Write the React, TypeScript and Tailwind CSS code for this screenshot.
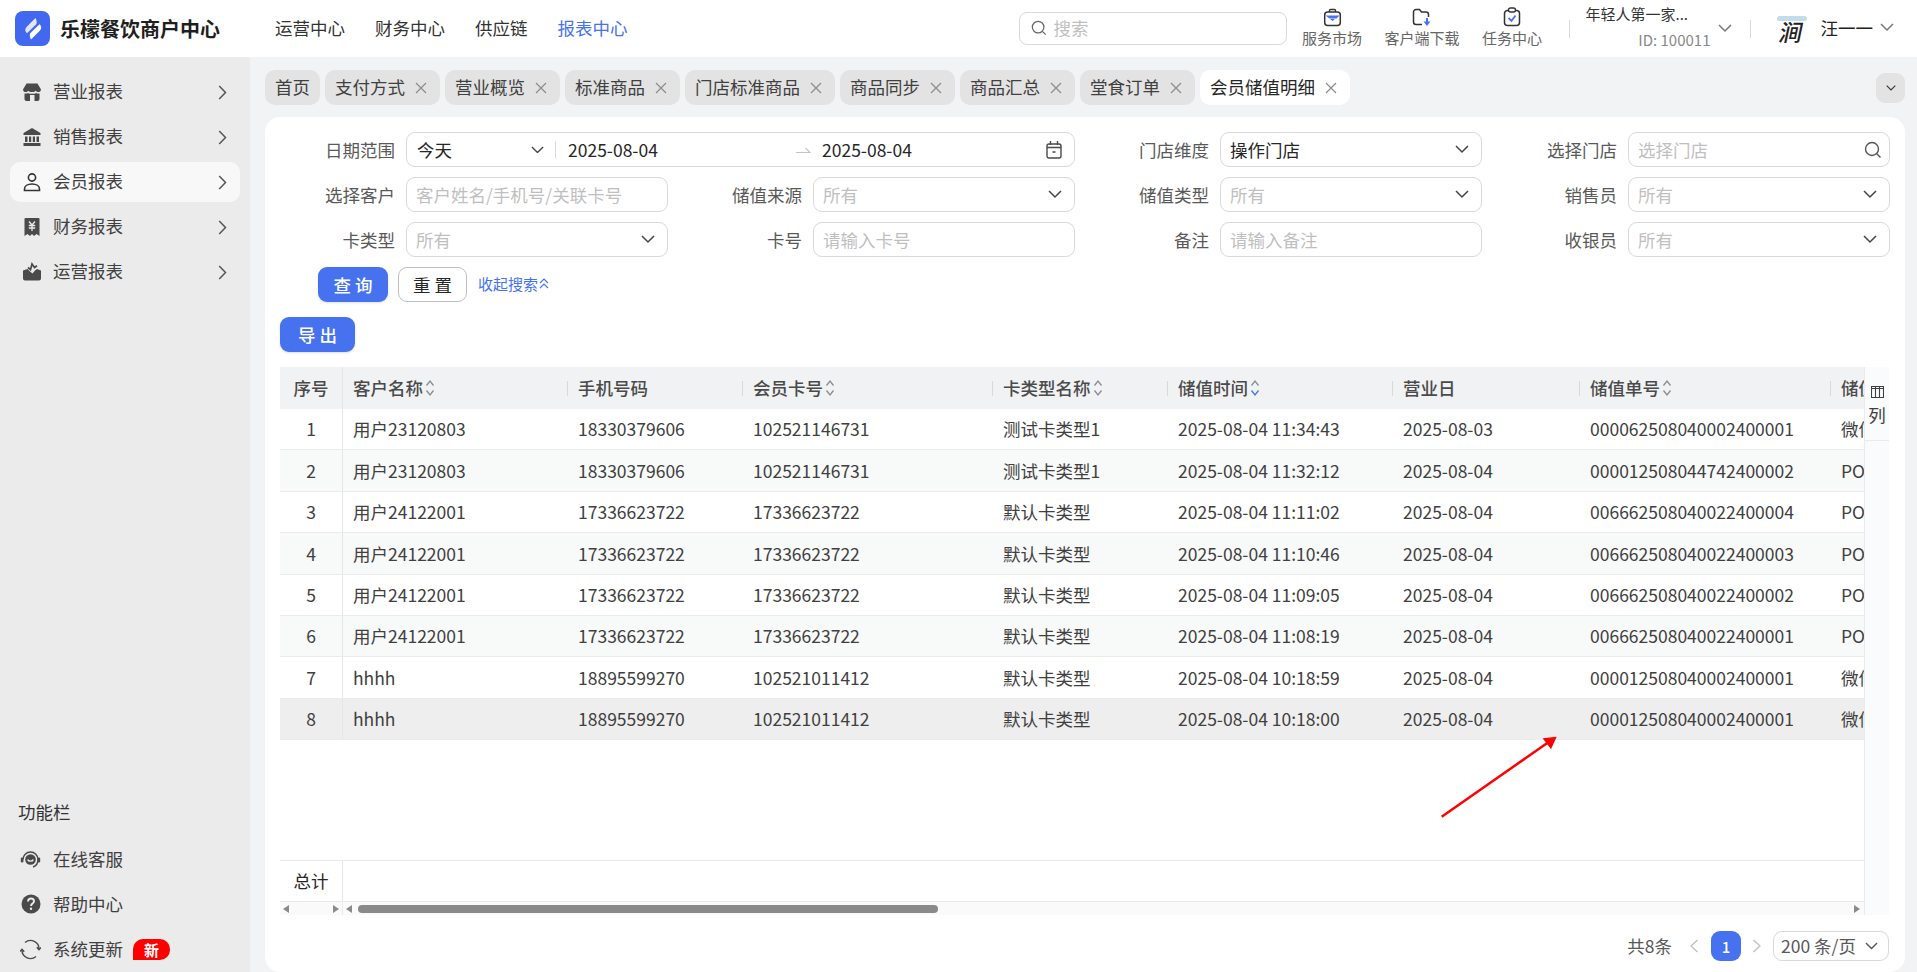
import React from "react";

const FONT = '"Noto Sans CJK SC","Noto Sans",sans-serif';

function ChevDown({ className = "text-[#444]", w = 14 }: { className?: string; w?: number }) {
  return (
    <svg width={w} height={w * 0.6} viewBox="0 0 14 8.4" fill="none" stroke="currentColor" strokeWidth="1.5" className={className + " shrink-0"}>
      <path d="M1 1l6 6 6-6" />
    </svg>
  );
}
function ChevRight() {
  return (
    <svg width="9" height="15" viewBox="0 0 9 15" fill="none" stroke="#555" strokeWidth="1.5" className="shrink-0">
      <path d="M1.2 1l6.3 6.5L1.2 14" />
    </svg>
  );
}
function Close() {
  return (
    <svg width="12" height="12" viewBox="0 0 12 12" fill="none" stroke="#8c8c8c" strokeWidth="1.2" className="shrink-0">
      <path d="M1 1l10 10M11 1L1 11" />
    </svg>
  );
}
function Sort({ active = false }: { active?: boolean }) {
  return (
    <svg width="10" height="18" viewBox="0 0 10 18" fill="none" strokeWidth="1.3" className="shrink-0 ml-[2px]">
      <path d="M1.5 6.5L5 2l3.5 4.5" stroke="#8c8c8c" />
      <path d="M1.5 11.5L5 16l3.5-4.5" stroke={active ? "#4672ef" : "#8c8c8c"} />
    </svg>
  );
}
function SearchIcon({ size = 18, color = "#666" }: { size?: number; color?: string }) {
  return (
    <svg width={size} height={size} viewBox="0 0 18 18" fill="none" stroke={color} strokeWidth="1.4" className="shrink-0">
      <circle cx="8" cy="8" r="6.5" />
      <path d="M12.8 12.8L16.5 16.5" />
    </svg>
  );
}

function IconStore() {
  return (
    <svg width="20" height="20" viewBox="0 0 20 20" fill="#4a4a4a">
      <path d="M4.5 1.5h11l3.5 6c0 1.7-1.3 2.6-2.7 2.6-1.1 0-2-.6-2.6-1.4-.7.8-1.6 1.4-3.7 1.4s-3-.6-3.7-1.4c-.6.8-1.5 1.4-2.6 1.4C2.3 10.100 1 9.200 1 7.500z" />
      <path fillRule="evenodd" d="M2.500 11.500c1.300.3 2.600 0 3.500-.6 1 .6 2.500.9 4 .9s3-.3 4-.9c.9.6 2.200.9 3.500.6V17a2 2 0 0 1-2 2h-11a2 2 0 0 1-2-2zM8 13h4.500v6H8z" />
    </svg>
  );
}
function IconBank() {
  return (
    <svg width="20" height="20" viewBox="0 0 20 20" fill="#4a4a4a">
      <path d="M10 1l8.500 5v2h-17V6zM3 9.500h2.500V15H3zM7 9.500h2.200V15H7zM10.800 9.500H13V15h-2.200zM14.500 9.500H17V15h-2.500zM1.500 16h17v3h-17z" />
    </svg>
  );
}
function IconUser() {
  return (
    <svg width="20" height="20" viewBox="0 0 20 20" fill="none" stroke="#333" strokeWidth="1.6">
      <circle cx="10" cy="5.500" r="3.600" />
      <path d="M2.500 18.500v-1.500c0-3 3-5 7.500-5s7.500 2 7.500 5v1.500z" />
    </svg>
  );
}
function IconReceipt() {
  return (
    <svg width="20" height="20" viewBox="0 0 20 20">
      <path d="M3.500 1h13a1 1 0 0 1 1 1v17l-3-2-2.500 2-2-2-2 2-2.500-2-3 2V2a1 1 0 0 1 1-1z" fill="#4a4a4a" />
      <path d="M7 4.500l3 3.500 3-3.500M6.800 8.500h6.400M6.800 11h6.400M10 8v6" stroke="#ebebeb" strokeWidth="1.300" fill="none" />
    </svg>
  );
}
function IconBox() {
  return (
    <svg width="20" height="20" viewBox="0 0 20 20">
      <path d="M1 8.500l4.500-1.500 2.500 2.500 2.500 2 2.500-3 2-1.500 4 1.500v8a2 2 0 0 1-2 2H3a2 2 0 0 1-2-2z" fill="#4a4a4a" />
      <path d="M6 5.500l2.500 2.200 1.500-5.700 2.500 3.500 2.500-1.800" stroke="#4a4a4a" strokeWidth="1.700" fill="none" />
    </svg>
  );
}
function IconHeadset() {
  return (
    <svg width="21" height="21" viewBox="0 0 21 21" fill="none">
      <path d="M3 10.500a7.500 7.500 0 0 1 15 0c0 3.500-2 6.500-5 7.500" stroke="#4a4a4a" strokeWidth="1.500" />
      <circle cx="10.500" cy="10.500" r="5.300" fill="#4a4a4a" />
      <path d="M7.800 10.500c.4 2.200 5 2.200 5.400 0" stroke="#ebebeb" strokeWidth="1.400" />
      <rect x="0.800" y="8.500" width="2.600" height="5" rx="1.200" fill="#4a4a4a" />
      <rect x="17.600" y="8.500" width="2.600" height="5" rx="1.200" fill="#4a4a4a" />
    </svg>
  );
}
function IconHelp() {
  return (
    <svg width="20" height="20" viewBox="0 0 20 20">
      <circle cx="10" cy="10" r="9.500" fill="#4a4a4a" />
      <path d="M7 7.500c0-2 1.300-3 3-3s3 1 3 2.700c0 2.300-3 2.300-3 4.800" stroke="#ebebeb" strokeWidth="1.900" fill="none" />
      <circle cx="10" cy="14.700" r="1.200" fill="#ebebeb" />
    </svg>
  );
}
function IconSync() {
  return (
    <svg width="21" height="21" viewBox="0 0 21 21" fill="none" stroke="#4a4a4a" strokeWidth="1.400">
      <path d="M5 3.500A8.500 8.500 0 0 1 19 10.500" />
      <path d="M16 17.500A8.500 8.500 0 0 1 2 10.500" />
      <path d="M16.800 8.300L19 10.800l2-2.300M4.200 12.700L2 10.200 0 12.500" />
    </svg>
  );
}
function Bag() {
  return (
    <svg width="19" height="19" viewBox="0 0 19 19" fill="none">
      <path d="M6.500 4V2.500a1 1 0 0 1 1-1h4a1 1 0 0 1 1 1V4" stroke="#333" strokeWidth="1.400" />
      <rect x="1.700" y="4" width="15.600" height="13.500" rx="3" stroke="#333" strokeWidth="1.500" />
      <path d="M2.500 7.500h14l-3 3H6.500z" fill="#4672ef" />
      <path d="M7 11h5l-2.500 2z" fill="#4672ef" />
    </svg>
  );
}
function FolderDown() {
  return (
    <svg width="21" height="19" viewBox="0 0 21 19" fill="none">
      <path d="M10 16.500H4a2.500 2.500 0 0 1-2.500-2.500V4A2.500 2.500 0 0 1 4 1.500h3.500l2 2.500H14a2.500 2.500 0 0 1 2.500 2.500V9" stroke="#333" strokeWidth="1.500" />
      <path d="M15 10v5" stroke="#4672ef" strokeWidth="2" />
      <path d="M11.500 13.500H18.500L15 18z" fill="#4672ef" />
    </svg>
  );
}
function Clip() {
  return (
    <svg width="18" height="20" viewBox="0 0 18 20" fill="none">
      <rect x="1.500" y="3.500" width="15" height="15" rx="3" stroke="#333" strokeWidth="1.500" />
      <rect x="5.500" y="1" width="7" height="4" rx="2" fill="#fff" stroke="#333" strokeWidth="1.400" />
      <path d="M5.500 11l3 2.800 4-5.300" stroke="#4672ef" strokeWidth="1.800" />
    </svg>
  );
}

function Field({ label, ph, value, kind }: { label: string; ph: string; value?: string; kind?: "select" | "search" }) {
  return (
    <>
      <label className="flex items-center justify-end pr-[11px] text-[#595959] whitespace-nowrap">{label}</label>
      <div className="h-[35px] rounded-[9px] border border-[#d9d9d9] bg-white flex items-center justify-between pl-[9px] pr-[12px]">
        <span className={value ? "text-[#262626]" : "text-[#bfbfbf]"}>{value || ph}</span>
        {kind === "select" && <ChevDown />}
        {kind === "search" && <span className="-mr-[5px]"><SearchIcon size={18} color="#555" /></span>}
      </div>
    </>
  );
}

const NAV_SIDE = [
  ["营业报表", <IconStore key="a" />],
  ["销售报表", <IconBank key="b" />],
  ["会员报表", <IconUser key="c" />],
  ["财务报表", <IconReceipt key="d" />],
  ["运营报表", <IconBox key="e" />],
] as const;

const TABS = ["支付方式", "营业概览", "标准商品", "门店标准商品", "商品同步", "商品汇总", "堂食订单"];

const ROWS = [
  ["1", "用户23120803", "18330379606", "102521146731", "测试卡类型1", "2025-08-04 11:34:43", "2025-08-03", "000062508040002400001", "微信"],
  ["2", "用户23120803", "18330379606", "102521146731", "测试卡类型1", "2025-08-04 11:32:12", "2025-08-04", "000012508044742400002", "POS"],
  ["3", "用户24122001", "17336623722", "17336623722", "默认卡类型", "2025-08-04 11:11:02", "2025-08-04", "006662508040022400004", "POS"],
  ["4", "用户24122001", "17336623722", "17336623722", "默认卡类型", "2025-08-04 11:10:46", "2025-08-04", "006662508040022400003", "POS"],
  ["5", "用户24122001", "17336623722", "17336623722", "默认卡类型", "2025-08-04 11:09:05", "2025-08-04", "006662508040022400002", "POS"],
  ["6", "用户24122001", "17336623722", "17336623722", "默认卡类型", "2025-08-04 11:08:19", "2025-08-04", "006662508040022400001", "POS"],
  ["7", "hhhh", "18895599270", "102521011412", "默认卡类型", "2025-08-04 10:18:59", "2025-08-04", "000012508040002400001", "微信"],
  ["8", "hhhh", "18895599270", "102521011412", "默认卡类型", "2025-08-04 10:18:00", "2025-08-04", "000012508040002400001", "微信"],
];

const COLS = "grid-cols-[63px_224px_175px_250px_175px_225px_187px_251px_120px]";

function Tri({ dir }: { dir: "l" | "r" }) {
  return (
    <svg width="6" height="8" viewBox="0 0 6 8" fill="#8a8a8a" className="shrink-0">
      <path d={dir === "l" ? "M6 0v8L0 4z" : "M0 0v8l6-4z"} />
    </svg>
  );
}

function Head({ t, sort, active }: { t: string; sort?: boolean; active?: boolean }) {
  return (
    <div className="flex items-center whitespace-nowrap">
      <span className="w-px h-[15px] bg-[#d9d9d9] mr-[10px] shrink-0" />
      <span>{t}</span>
      {sort && <Sort active={active} />}
    </div>
  );
}

export default function App() {
  return (
    <div className="relative w-[1917px] h-[972px] flex flex-col overflow-hidden bg-[#f2f3f5] text-[17.500px] leading-none text-[#404040]" style={{ fontFamily: FONT }}>
      {/* header */}
      <header className="h-[57px] shrink-0 bg-white flex items-center">
        <div className="ml-[15px] w-[35px] h-[35px] rounded-[8px] bg-[#4268f0] flex items-center justify-center">
          <svg width="20" height="24" viewBox="0 0 20 24">
            <path d="M12.500 1L4 9.500c-2.500 2.500-2 5 0 6.800L13 7.500c1-1 1-4-.5-6.500z" fill="#dfe6ff" />
            <path d="M8 22.500l8.500-8.500c2.500-2.500 2-5 0-6.800L7.500 16c-1 1-1 4 .5 6.500z" fill="#fff" />
          </svg>
        </div>
        <span className="ml-[10px] text-[20px] font-bold text-[#1f1f1f] whitespace-nowrap">乐檬餐饮商户中心</span>
        <nav className="ml-[55px] -mt-[2px] flex gap-[30px] whitespace-nowrap text-[#333]">
          <span>运营中心</span>
          <span>财务中心</span>
          <span>供应链</span>
          <span className="text-[#4672ef]">报表中心</span>
        </nav>
        <div className="ml-[391px] w-[268px] h-[33px] -mt-[1px] rounded-[8px] border border-[#d9d9d9] bg-white flex items-center pl-[11px] gap-[7px] text-[#bfbfbf]">
          <SearchIcon size={16} />
          <span>搜索</span>
        </div>
        <div className="ml-[15px] pb-[5px] flex gap-[22px] text-[15px] text-[#666] whitespace-nowrap">
          <div className="flex flex-col items-center gap-[3px] w-[61px]"><span className="h-[20px] flex items-center"><Bag /></span><span>服务市场</span></div>
          <div className="flex flex-col items-center gap-[3px] w-[75px]"><span className="h-[20px] flex items-center"><FolderDown /></span><span>客户端下载</span></div>
          <div className="flex flex-col items-center gap-[3px] w-[61px]"><span className="h-[20px] flex items-center"><Clip /></span><span>任务中心</span></div>
        </div>
        <span className="ml-[26px] w-px h-[18px] bg-[#d9d9d9] shrink-0" />
        <div className="ml-[16px] w-[125px] pb-[4px] flex flex-col text-[15px] gap-[11px]">
          <span className="text-[#333] whitespace-nowrap">年轻人第一家...</span>
          <span className="text-right text-[#888]">ID: 100011</span>
        </div>
        <span className="ml-[7px]"><ChevDown className="text-[#777]" /></span>
        <span className="ml-[18px] w-px h-[18px] bg-[#d9d9d9] shrink-0" />
        <div className="ml-[22px] w-[38px] h-[38px] rounded-full bg-white flex flex-col items-center shrink-0 overflow-hidden">
          <span className="mt-[6px] w-[30px] h-[5px] rounded-full bg-[#c3dcea]" />
          <span className="-mt-[1px] text-[23px] font-medium text-[#222] -skew-x-12 whitespace-nowrap">涧</span>
        </div>
        <span className="ml-[10px] -mt-[2px] text-[#222] whitespace-nowrap">汪一一</span>
        <span className="ml-[7px] -mt-[2px]"><ChevDown className="text-[#777]" /></span>
      </header>

      <div className="flex-1 flex min-h-0">
        {/* sidebar */}
        <aside className="w-[250px] shrink-0 bg-[#ebebeb] flex flex-col justify-between pt-[15px] pb-[3px]">
          <div className="flex flex-col gap-[5px]">
            {NAV_SIDE.map(([t, icon], i) => (
              <div key={t} className={"mx-[10px] h-[40px] rounded-[10px] flex items-center pl-[12px] pr-[13px] " + (i === 2 ? "bg-[#f8f8f8]" : "")}>
                <span className="w-[20px] flex justify-center -mt-[1px]">{icon}</span>
                <span className="ml-[11px] flex-1 -mt-[2px]">{t}</span>
                <ChevRight />
              </div>
            ))}
          </div>
          <div className="flex flex-col">
            <div className="ml-[18px] h-[24px] mb-[15px] flex items-center text-[#333]">功能栏</div>
            <div className="flex flex-col gap-[5px]">
              <div className="mx-[10px] h-[40px] flex items-center pl-[10px]"><IconHeadset /><span className="ml-[12px]">在线客服</span></div>
              <div className="mx-[10px] h-[40px] flex items-center pl-[11px]"><IconHelp /><span className="ml-[12px]">帮助中心</span></div>
              <div className="mx-[10px] h-[40px] flex items-center pl-[10px]">
                <IconSync />
                <span className="ml-[12px]">系统更新</span>
                <span className="ml-[10px] w-[37px] h-[21px] bg-[#ff0000] text-white text-[15px] font-bold rounded-t-[10px] rounded-br-[10px] flex items-center justify-center">新</span>
              </div>
            </div>
          </div>
        </aside>

        {/* main */}
        <main className="flex-1 min-w-0 flex flex-col pl-[15px] pr-[12px] pt-[13px]">
          <div className="h-[35px] flex items-center gap-[5px] shrink-0">
            <div className="h-[35px] px-[10px] rounded-[10px] bg-[#e3e3e3] flex items-center"><span className="-mt-[2px]">首页</span></div>
            {TABS.map((t) => (
              <div key={t} className="h-[35px] pl-[10px] pr-[13px] rounded-[10px] bg-[#e3e3e3] flex items-center gap-[10px] whitespace-nowrap">
                <span className="-mt-[2px]">{t}</span>
                <Close />
              </div>
            ))}
            <div className="h-[35px] pl-[10px] pr-[13px] rounded-[10px] bg-white flex items-center gap-[10px] whitespace-nowrap text-[#262626]">
              <span className="-mt-[2px]">会员储值明细</span>
              <Close />
            </div>
            <div className="ml-auto w-[29px] h-[30px] rounded-[9px] bg-[#e3e3e3] flex items-center justify-center">
              <ChevDown w={10} className="text-[#333]" />
            </div>
          </div>

          <div className="mt-[12px] flex-1 min-h-0 rounded-[15px] bg-white flex flex-col pl-[15px] pr-[16px] pt-[15px]">
            {/* filters */}
            <div className="ml-[11px] grid grid-cols-[115px_262px_145px_262px_145px_262px_146px_262px] gap-y-[10px]">
              <label className="flex items-center justify-end pr-[11px] text-[#595959]">日期范围</label>
              <div className="col-span-3 h-[35px] rounded-[9px] border border-[#d9d9d9] flex items-center pl-[10px] pr-[12px]">
                <span className="text-[#262626] w-[114px]">今天</span>
                <ChevDown w={13} />
                <span className="ml-[11px] w-px h-[17px] bg-[#d9d9d9]" />
                <span className="ml-[12px] text-[#262626] w-[228px]">2025-08-04</span>
                <svg width="15" height="8" viewBox="0 0 15 8" fill="none" stroke="#c4c4c4" strokeWidth="1.200" className="shrink-0">
                  <path d="M0 6.500h14L9.500 2" />
                </svg>
                <span className="ml-[11px] text-[#262626] flex-1">2025-08-04</span>
                <svg width="16" height="18" viewBox="0 0 16 18" fill="none" stroke="#4a4a4a" strokeWidth="1.400" className="shrink-0">
                  <rect x="1" y="3" width="14" height="14" rx="2" />
                  <path d="M4.500 0v4M11.500 0v4M1 6.500h14M6.500 11h3" />
                </svg>
              </div>
              <Field label="门店维度" ph="" value="操作门店" kind="select" />
              <Field label="选择门店" ph="选择门店" kind="search" />

              <Field label="选择客户" ph="客户姓名/手机号/关联卡号" />
              <Field label="储值来源" ph="所有" kind="select" />
              <Field label="储值类型" ph="所有" kind="select" />
              <Field label="销售员" ph="所有" kind="select" />

              <Field label="卡类型" ph="所有" kind="select" />
              <Field label="卡号" ph="请输入卡号" />
              <Field label="备注" ph="请输入备注" />
              <Field label="收银员" ph="所有" kind="select" />
            </div>

            <div className="mt-[10px] ml-[38px] flex items-center h-[35px] shrink-0">
              <button className="w-[70px] h-[35px] pl-[4px] rounded-[9px] bg-[#4672ef] text-white font-medium tracking-[4px] shadow-sm">查询</button>
              <button className="ml-[10px] w-[69px] h-[35px] pl-[4px] rounded-[9px] border border-[#bfbfbf] bg-white text-[#262626] tracking-[4px]">重置</button>
              <span className="ml-[11px] -mt-[2px] text-[15px] text-[#4672ef] whitespace-nowrap flex items-center">
                收起搜索
                <svg width="10" height="11" viewBox="0 0 10 11" fill="none" stroke="#4672ef" strokeWidth="1.100" className="ml-[1px]">
                  <path d="M1 5l4-4 4 4M1 10l4-4 4 4" />
                </svg>
              </span>
            </div>

            <div className="mt-[15px] shrink-0">
              <button className="w-[75px] h-[35px] pl-[4px] rounded-[9px] bg-[#4672ef] text-white font-medium tracking-[4px] shadow-sm">导出</button>
            </div>

            {/* table */}
            <div className="mt-[15px] h-[548px] shrink-0 flex">
              <div className="w-[1584px] shrink-0 flex flex-col overflow-hidden">
                <div className={"grid h-[42px] shrink-0 bg-[#f1f2f4] font-medium text-[#4a4a4a] " + COLS}>
                  <div className="flex items-center justify-center border-r border-[#e6e6e6]">序号</div>
                  <div className="flex items-center pl-[10px] whitespace-nowrap"><span>客户名称</span><Sort /></div>
                  <Head t="手机号码" />
                  <Head t="会员卡号" sort />
                  <Head t="卡类型名称" sort />
                  <Head t="储值时间" sort active />
                  <Head t="营业日" />
                  <Head t="储值单号" sort />
                  <Head t="储值来源" />
                </div>
                {ROWS.map((r, i) => (
                  <div key={r[0]} className={"grid h-[41.400px] shrink-0 border-b border-[#ebebeb] " + COLS + " " + (i === 7 ? "bg-[#eeeeee]" : i % 2 ? "bg-[#f8f9f9]" : "bg-white")}>
                    <div className="flex items-center justify-center border-r border-[#e6e6e6]">{r[0]}</div>
                    <div className="flex items-center pl-[10px] whitespace-nowrap">{r[1]}</div>
                    {r.slice(2).map((c, j) => (
                      <div key={j} className="flex items-center pl-[11px] whitespace-nowrap">{c}</div>
                    ))}
                  </div>
                ))}
                <div className="flex-1 border-b border-[#e8e8e8]" />
                <div className="h-[41px] shrink-0 flex border-b border-[#e8e8e8]">
                  <div className="w-[63px] border-r border-[#e6e6e6] flex items-center justify-center text-[#262626]">总计</div>
                </div>
                <div className="h-[13px] shrink-0 bg-[#fafafa] flex items-center">
                  <div className="w-[63px] px-[3px] flex items-center justify-between border-r border-[#ececec] h-full">
                    <Tri dir="l" />
                    <Tri dir="r" />
                  </div>
                  <div className="flex-1 flex items-center pl-[3px] pr-[4px]">
                    <Tri dir="l" />
                    <div className="flex-1 ml-[6px] mr-[3px]">
                      <div className="w-[580px] h-[8px] rounded-full bg-[#8a8a8a]" />
                    </div>
                    <Tri dir="r" />
                  </div>
                </div>
              </div>
              <div className="flex-1 bg-[#fafbfd] border-l border-[#ebebeb] flex flex-col">
                <div className="h-[74px] flex flex-col items-center pt-[19px] border-b border-[#ebebeb]">
                  <svg width="13" height="12" viewBox="0 0 13 12" fill="none" stroke="#404040" strokeWidth="1.100">
                    <path d="M.5.500h12v11H.5zM4.500.500v11M8.500.500v11M.5 2.500h12" />
                  </svg>
                  <span className="mt-[8px]">列</span>
                </div>
              </div>
            </div>

            {/* pagination */}
            <div className="pt-[16px] flex items-center justify-end h-[46px] shrink-0 text-[#595959]">
              <span>共8条</span>
              <svg width="10" height="14" viewBox="0 0 10 14" fill="none" stroke="#bfbfbf" strokeWidth="1.300" className="ml-[17px]"><path d="M8.500 1L2 7l6.500 6" /></svg>
              <span className="ml-[12px] w-[30px] h-[30px] rounded-[9px] bg-[#4672ef] text-white font-medium flex items-center justify-center text-[15px]">1</span>
              <svg width="10" height="14" viewBox="0 0 10 14" fill="none" stroke="#bfbfbf" strokeWidth="1.300" className="ml-[11px]"><path d="M1.500 1L8 7l-6.500 6" /></svg>
              <div className="ml-[11px] w-[116px] h-[30px] rounded-[9px] border border-[#d9d9d9] flex items-center justify-between pl-[7px] pr-[10px] whitespace-nowrap">
                <span>200 条/页</span>
                <ChevDown w={13} className="text-[#555]" />
              </div>
            </div>
          </div>
        </main>
      </div>

      {/* red annotation arrow */}
      <svg className="absolute left-0 top-0 pointer-events-none" width="1917" height="972" fill="none">
        <path d="M1441.700 816.700L1548 742.500" stroke="#ff0000" strokeWidth="2.500" />
        <path d="M1556.700 736.700L1542.700 738.300L1551 749.300z" fill="#ff0000" />
      </svg>
    </div>
  );
}
